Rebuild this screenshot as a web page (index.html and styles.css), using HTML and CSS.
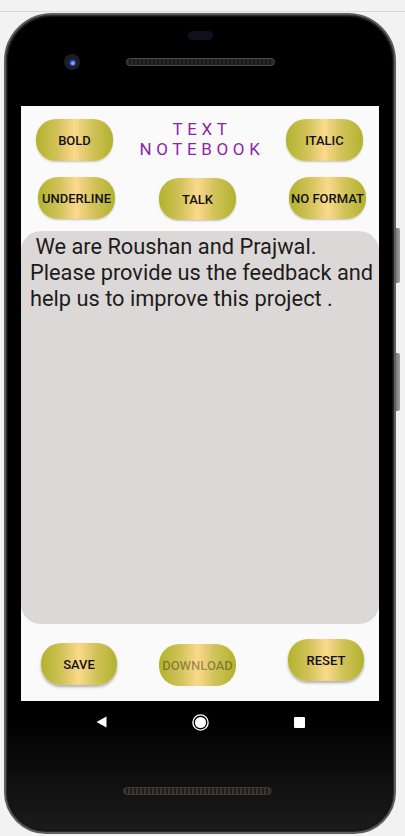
FILE: index.html
```html
<!DOCTYPE html>
<html>
<head>
<meta charset="utf-8">
<link rel="stylesheet" href="styles.css">
</head>
<body>
<div class="topline"></div>
<div class="phone">
  <div class="side-btn side-btn-1"></div>
  <div class="side-btn side-btn-2"></div>
  <div class="bezel-top">
    <div class="pill"></div>
    <div class="cam-row">
      <div class="camera"><div class="lens"></div></div>
      <div class="speaker"></div>
    </div>
  </div>
  <div class="screen">
    <div class="row1">
      <button class="btn">BOLD</button>
      <div class="title">TEXT<br>NOTEBOOK</div>
      <button class="btn">ITALIC</button>
    </div>
    <div class="row2">
      <button class="btn btn-underline">UNDERLINE</button>
      <button class="btn btn-talk">TALK</button>
      <button class="btn btn-noformat">NO FORMAT</button>
    </div>
    <div class="editor">&nbsp;We are Roushan and Prajwal.<br>Please provide us the feedback and help us to improve this project .</div>
    <div class="row3">
      <button class="btn btn-save">SAVE</button>
      <button class="btn btn-download" disabled>DOWNLOAD</button>
      <button class="btn btn-reset">RESET</button>
    </div>
  </div>
  <div class="navbar">
    <svg class="nav-back" width="11" height="12" viewBox="0 0 11 12"><path d="M10.5 0.5 L10.5 11.5 L0.5 6 Z" fill="#fff"/></svg>
    <svg class="nav-home" width="17" height="17" viewBox="0 0 17 17"><circle cx="8.5" cy="8.5" r="7.6" fill="none" stroke="#fff" stroke-width="1.4"/><circle cx="8.5" cy="8.5" r="5.6" fill="#fff"/></svg>
    <div class="nav-recent"></div>
  </div>
  <div class="speaker speaker-bottom"></div>
</div>
</body>
</html>
```

FILE: styles.css
```css
html, body {
  margin: 0;
  padding: 0;
}
body {
  background: #f2f2f2;
  width: 405px;
  height: 836px;
  overflow: hidden;
  font-family: Roboto, "Noto Sans", Arial, sans-serif;
}
.topline {
  height: 11px;
  border-bottom: 1px solid #d9d9d9;
}
.phone {
  position: relative;
  width: 392px;
  height: 821px;
  margin: 1px 0 0 4px;
  padding: 0 15px;
  box-sizing: border-box;
  border: 2px solid #5e5e5e;
  border-radius: 48px 48px 42px 42px;
  background: linear-gradient(to bottom, #000 0%, #000 86%, #1c1c1c 100%);
  box-shadow: inset 0 0 0 1px #2a2a2a, inset 0 0 0 2px #111;
  display: flex;
  flex-direction: column;
}
.side-btn {
  position: absolute;
  right: -6px;
  width: 4px;
  background: linear-gradient(to right, #7a7a7a, #a0a0a0);
  border-radius: 0 2px 2px 0;
}
.side-btn-1 { top: 213px; height: 55px; }
.side-btn-2 { top: 338px; height: 58px; }
.bezel-top {
  height: 91px;
  display: flex;
  flex-direction: column;
}
.pill {
  align-self: center;
  width: 25px;
  height: 9px;
  margin-top: 16px;
  border-radius: 5px;
  background: #0e111b;
}
.cam-row {
  display: flex;
  align-items: center;
  height: 16px;
  margin-top: 14px;
}
.camera {
  width: 16px;
  height: 16px;
  margin-left: 43px;
  border-radius: 50%;
  background: #1c1e26;
  display: flex;
  align-items: center;
  justify-content: center;
}
.lens {
  width: 7px;
  height: 7px;
  border-radius: 50%;
  background: radial-gradient(circle at 55% 60%, #8aa8ff 0 20%, #2c45a8 45%, #0d1230 100%);
}
.speaker {
  width: 149px;
  height: 8px;
  margin-left: 46px;
  border-radius: 5px;
  background: repeating-linear-gradient(90deg, #2a2a2a 0 2px, #1a1a1a 2px 4px);
  border: 1px solid #4a4a4a;
  box-sizing: border-box;
}
.speaker-bottom {
  margin-left: 102px;
  margin-top: 44px;
  border-color: #3e3a36;
  background: repeating-linear-gradient(90deg, #3a3531 0 2px, #1f1c1a 2px 4px);
}
.screen {
  width: 358px;
  height: 595px;
  background: #fafafa;
  display: flex;
  flex-direction: column;
}
.btn {
  width: 77px;
  height: 42px;
  border: none;
  border-radius: 20px;
  padding: 0;
  background: linear-gradient(90deg, #b2b22d 0%, #d2c35a 28%, #fbd98c 50%, #d2c35a 72%, #b2b22d 100%);
  box-shadow: 0 1px 2px rgba(0, 0, 0, 0.22);
  font-family: Roboto, "Noto Sans", Arial, sans-serif;
  font-size: 13px;
  font-weight: 500;
  color: #111;
  white-space: nowrap;
  display: flex;
  align-items: center;
  justify-content: center;
  overflow: visible;
}
.row1 {
  display: flex;
  align-items: flex-start;
  justify-content: space-between;
  margin-top: 13px;
  padding: 0 16px 0 15px;
}
.title {
  font-size: 17px;
  line-height: 20px;
  letter-spacing: 4.6px;
  color: #8e24aa;
  text-align: center;
  padding-left: 4px;
  margin-left: 1px;
}
.row2 {
  display: flex;
  align-items: flex-start;
  margin-top: 16px;
}
.btn-underline { margin-left: 17px; }
.btn-talk { margin-left: 44px; margin-top: 1px; }
.btn-noformat { margin-left: 53px; }
.editor {
  margin-top: 11px;
  height: 393px;
  box-sizing: border-box;
  background: #ddd8d8;
  border-radius: 20px;
  padding: 3px 0 0 9px;
  font-size: 21.8px;
  line-height: 26px;
  color: #1c1c1c;
}
.row3 {
  display: flex;
  align-items: flex-start;
  margin-top: 15px;
}
.btn-save {
  margin-left: 20px;
  margin-top: 4px;
  width: 76px;
  box-shadow: 0 2px 3px rgba(0, 0, 0, 0.3);
}
.btn-download {
  margin-left: 42px;
  margin-top: 5px;
  box-shadow: none;
  color: rgba(0, 0, 0, 0.36);
}
.btn-reset {
  margin-left: 52px;
  width: 76px;
  box-shadow: 0 2px 3px rgba(0, 0, 0, 0.3);
}
.navbar {
  height: 42px;
  display: flex;
  align-items: center;
}
.nav-back { margin-left: 75px; }
.nav-home { margin-left: 85px; }
.nav-recent {
  width: 11px;
  height: 11px;
  border-radius: 1px;
  background: #fff;
  margin-left: 85px;
}
```
